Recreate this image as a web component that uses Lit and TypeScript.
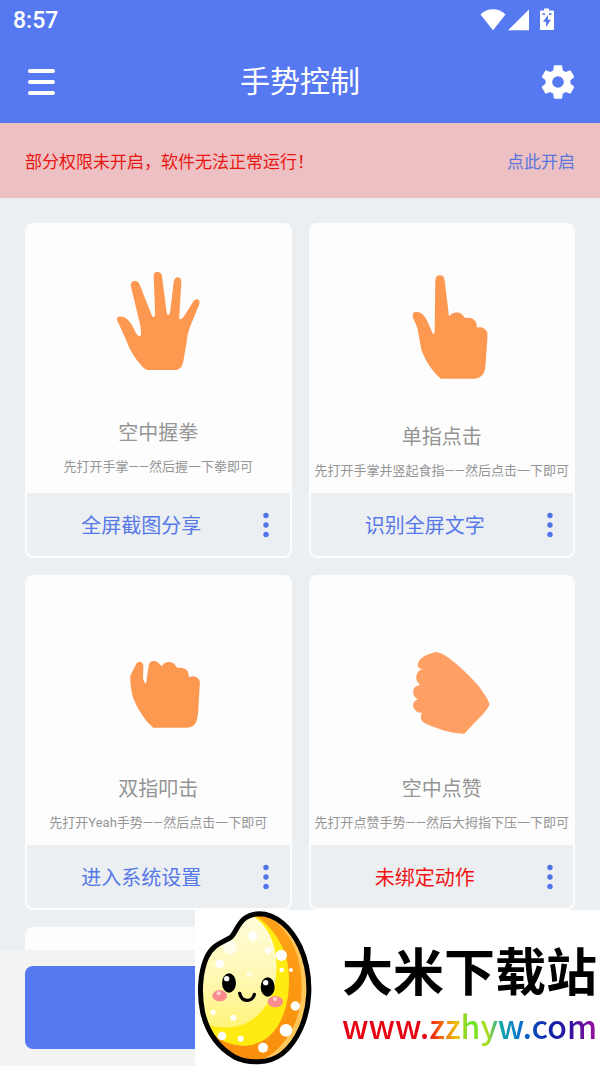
import { LitElement, html, svg, css } from "lit";
import { customElement, property } from "lit/decorators.js";

interface Gesture {
  name: string;
  hint: string;
  action: string;
  bound: boolean;
  height: number;
  viewBox: string;
  path: string;
  tone: string;
}

const GESTURES: Gesture[] = [
  {
    name: "空中握拳",
    hint: "先打开手掌——然后握一下拳即可",
    action: "全屏截图分享",
    bound: true,
    height: 142,
    viewBox: "-5 -42 360 426",
    tone: "#fd9851",
    path: "M52 190C54 183 66 183 74 187C90 195 98 212 107 230C112 240 118 246 122 243C126 238 124 222 121 207L94 95C91 81 102 76 111 79C117 81 119 87 122 94L152 170C156 181 159 187 163 186C167 184 166 176 166 168L162 64C162 54 166 51 174 51C182 51 186 55 187 63L200 165C201 174 202 180 206 180C210 180 211 173 212 165L222 82C223 72 228 67 235 67C242 68 246 73 245 83L239 180C238 188 239 193 243 193C248 193 252 185 257 178L280 141C285 133 291 131 296 134C301 138 300 143 298 149L271 216C265 231 263 246 261 260L251 319C248 335 241 345 228 345H148C136 345 131 338 124 330C105 309 92 288 82 262L55 201C53 197 51 194 52 190Z",
  },
  {
    name: "单指点击",
    hint: "先打开手掌并竖起食指——然后点击一下即可",
    action: "识别全屏文字",
    bound: true,
    height: 150,
    viewBox: "-40 -69 360 450",
    tone: "#fd9851",
    path: "M52 165C53 155 62 154 71 157C86 162 93 177 100 193L113 222C116 225 118 217 118 208L120 62C120 51 125 46 134 46C143 46 147 52 148 61L159 152C160 161 160 170 163 167C172 157 188 155 198 162C204 166 206 172 210 174C222 172 237 176 242 187C245 193 243 200 246 203C258 198 273 206 276 219C277 225 276 229 276 236L271 310C270 329 267 341 257 349C251 354 245 356 238 356H137C117 340 91 306 78 269L67 208C64 195 57 183 53 174Z",
  },
  {
    name: "双指叩击",
    hint: "先打开Yeah手势——然后点击一下即可",
    action: "进入系统设置",
    bound: true,
    height: 150,
    viewBox: "-34 -171 360 450",
    tone: "#fd9851",
    path: "M63 89L79 57C83 48 91 45 98 50C102 54 102 59 102 65L101 97C103 104 106 114 109 112C112 109 112 99 113 91L118 60C119 48 126 44 135 45C146 46 151 54 157 61C163 49 175 46 186 49C195 52 198 58 204 66C217 63 230 67 235 76C238 82 237 87 239 94C250 87 268 93 271 106C272 111 271 116 271 123L266 202C264 222 261 233 251 240C245 244 239 245 231 245H132C109 226 87 194 73 159C66 139 62 111 63 89Z",
  },
  {
    name: "空中点赞",
    hint: "先打开点赞手势——然后大拇指下压一下即可",
    action: "未绑定动作",
    bound: false,
    height: 150,
    viewBox: "-40 -156 360 450",
    tone: "#fea063",
    path: "M67 72C69 50 95 39 124 33C137 35 150 44 161 51C190 73 216 99 242 126C258 144 274 168 283 189C277 207 257 226 242 241L207 278C173 277 143 269 116 258C97 250 80 246 77 233C76 226 78 220 80 215C68 217 55 207 53 194C53 184 60 177 69 175C56 170 52 159 54 149C56 138 65 133 76 133C62 124 59 107 67 94C71 87 77 86 83 84C75 84 67 80 67 72Z",
  },
];

@customElement("gesture-card")
class GestureCard extends LitElement {
  @property({ attribute: false }) gesture?: Gesture;

  static styles = css`
    :host {
      display: flex;
      flex-direction: column;
      min-width: 0;
      box-sizing: border-box;
      border: 2px solid #fdfdfd;
      border-radius: 8px;
      overflow: hidden;
      background: #ebeff2;
    }
    .panel {
      display: flex;
      flex-direction: column;
      align-items: center;
      justify-content: center;
      min-height: 268px;
      background: #fdfdfd;
      color: #959595;
    }
    .hand {
      display: block;
      width: 120px;
      margin-bottom: 36px;
    }
    .name {
      margin: 0 0 10px;
      font-size: 20px;
      line-height: 28px;
      font-weight: 400;
    }
    .hint {
      margin: 0;
      font-size: 13px;
      line-height: 20px;
      white-space: nowrap;
    }
    .foot {
      display: flex;
      align-items: stretch;
      height: 63px;
    }
    button {
      border: 0;
      padding: 0;
      background: none;
      font: inherit;
      cursor: pointer;
    }
    .action {
      flex: 1;
      min-width: 0;
      font-size: 20px;
      color: #5678e8;
    }
    .unbound {
      color: #f01414;
    }
    .more {
      display: grid;
      place-items: center;
      width: 21px;
      margin-right: 13px;
    }
  `;

  render() {
    const g = this.gesture;
    if (!g) return html`<div class="panel"></div><div class="foot"></div>`;
    return html`
      <div class="panel">
        <svg class="hand" height=${g.height} viewBox=${g.viewBox} aria-hidden="true">
          ${svg`<path d=${g.path} fill=${g.tone} />`}
        </svg>
        <h2 class="name">${g.name}</h2>
        <p class="hint">${g.hint}</p>
      </div>
      <div class="foot">
        <button class="action ${g.bound ? "" : "unbound"}">${g.action}</button>
        <button class="more" aria-label="更多">
          <svg width="6" height="26" viewBox="0 0 6 26" fill="#4f73e8">
            <circle cx="3" cy="3.5" r="2.7" />
            <circle cx="3" cy="13" r="2.7" />
            <circle cx="3" cy="22.5" r="2.7" />
          </svg>
        </button>
      </div>
    `;
  }
}

@customElement("site-badge")
class SiteBadge extends LitElement {
  static styles = css`
    :host {
      display: flex;
      align-items: center;
      gap: 27px;
      background: #fff;
      white-space: nowrap;
      overflow: hidden;
    }
    .rice {
      display: block;
      flex: none;
    }
    .label {
      padding-top: 18px;
    }
    .site {
      font-size: 51px;
      line-height: 56px;
      font-weight: 700;
      color: #000;
    }
    .address {
      display: block;
      width: max-content;
      font-family: "Noto Sans CJK SC", sans-serif;
      font-size: 32px;
      line-height: 46px;
      font-weight: 500;
      color: transparent;
      background: linear-gradient(
        90deg,
        #e60012 0%,
        #e60012 33%,
        #f05a10 38%,
        #f0c010 45%,
        #5fe62a 50%,
        #b0dc20 57%,
        #10a8a8 62%,
        #0a78c8 69%,
        #0a50c0 74%,
        #1020a8 82%,
        #3a10a0 90%,
        #a010a0 100%
      );
      -webkit-background-clip: text;
      background-clip: text;
    }
  `;

  render() {
    return html`
      <svg class="rice" width="120" height="156" viewBox="15 30 360 468" aria-hidden="true">
        <defs>
          <linearGradient id="pale" x1="0" y1="0" x2="0" y2="1">
            <stop offset="0" stop-color="#fffde0" />
            <stop offset=".6" stop-color="#fff8b0" />
            <stop offset="1" stop-color="#fff47a" />
          </linearGradient>
          <linearGradient id="deep" x1="0" y1="0" x2="0" y2="1">
            <stop offset="0" stop-color="#ffa318" />
            <stop offset="1" stop-color="#f98d0c" />
          </linearGradient>
          <clipPath id="body">
            <path d="M122 112C142 97 145 43 207 41C259 41 303 83 330 140C350 184 359 233 356 285C353 353 323 424 277 461C237 492 174 492 132 470C83 441 51 393 38 337C27 283 29 220 50 172C69 132 100 126 122 112Z" />
          </clipPath>
        </defs>
        <g clip-path="url(#body)">
          <rect x="15" y="30" width="360" height="468" fill="#ffc65a" />
          <path d="M225 40C305 90 342 180 334 290C326 375 285 440 225 475L180 498H15V30Z" fill="url(#deep)" />
          <path d="M190 45C245 75 290 140 296 215C302 300 280 370 238 408C190 450 110 450 50 385L20 250L100 30Z" fill="#ffeb12" />
          <path d="M175 40C225 65 254 115 258 175C264 240 250 300 205 344C160 386 105 390 45 372L20 250L90 30Z" fill="url(#pale)" />
          <g fill="#fff">
            <circle cx="189" cy="108" r="14" />
            <circle cx="120" cy="142" r="21" opacity=".7" />
            <circle cx="89" cy="191" r="13" />
            <circle cx="235" cy="151" r="10" />
            <circle cx="274" cy="166" r="17" />
            <circle cx="275" cy="210" r="7" />
            <circle cx="303" cy="210" r="6" />
            <circle cx="316" cy="318" r="14" />
            <circle cx="288" cy="391" r="19" />
            <circle cx="219" cy="443" r="15" />
            <circle cx="152" cy="416" r="9" />
            <circle cx="96" cy="408" r="13" />
            <circle cx="130" cy="353" r="9" />
            <circle cx="69" cy="337" r="8" />
            <circle cx="178" cy="222" r="9" opacity=".6" />
          </g>
        </g>
        <path
          d="M122 112C142 97 145 43 207 41C259 41 303 83 330 140C350 184 359 233 356 285C353 353 323 424 277 461C237 492 174 492 132 470C83 441 51 393 38 337C27 283 29 220 50 172C69 132 100 126 122 112Z"
          fill="none" stroke="#000" stroke-width="15" stroke-linejoin="round" />
        <ellipse cx="89" cy="287" rx="22" ry="17" fill="#fa8c8e" />
        <ellipse cx="256" cy="305" rx="23" ry="17" fill="#fa8c8e" />
        <circle cx="86" cy="280" r="6" fill="#ffd5d5" />
        <circle cx="255" cy="297" r="6" fill="#ffd5d5" />
        <ellipse cx="117" cy="249" rx="21" ry="29" fill="#000" />
        <ellipse cx="233" cy="261" rx="21" ry="29" fill="#000" />
        <circle cx="110" cy="236" r="8" fill="#fff" />
        <circle cx="227" cy="248" r="8" fill="#fff" />
        <path d="M149 280C155 307 187 308 193 283" fill="none" stroke="#000" stroke-width="10" stroke-linecap="round" />
      </svg>
      <div class="label">
        <div class="site">大米下载站</div>
        <span class="address">www.zzhyw.com</span>
      </div>
    `;
  }
}

@customElement("app-root")
class AppRoot extends LitElement {
  static styles = css`
    :host {
      position: relative;
      display: flex;
      flex-direction: column;
      height: 100vh;
      overflow: hidden;
      background: #ebeff2;
      font-family: Roboto, "Noto Sans CJK SC", sans-serif;
    }
    .header {
      flex: none;
      background: #5679f1;
      color: #fff;
    }
    .status {
      display: flex;
      align-items: center;
      justify-content: space-between;
      height: 40px;
      padding: 0 46px 0 13px;
      font-size: 23px;
      font-weight: 500;
    }
    .signals {
      display: block;
    }
    .nav {
      display: grid;
      grid-template-columns: 40px 1fr 40px;
      align-items: center;
      height: 83px;
      padding: 0 22px;
    }
    .title {
      margin: 0;
      text-align: center;
      font-size: 30px;
      line-height: 40px;
      font-weight: 400;
    }
    .icon {
      display: grid;
      place-items: center;
      width: 40px;
      height: 40px;
      padding: 0;
      border: 0;
      background: none;
      color: inherit;
    }
    .notice {
      flex: none;
      display: flex;
      align-items: center;
      justify-content: space-between;
      height: 75px;
      padding: 0 25px;
      background: #edc1c4;
      font-size: 17px;
    }
    .warning {
      margin: 0;
      color: #e91510;
    }
    .enable {
      color: #5a75dc;
      text-decoration: none;
    }
    .list {
      flex: 1;
      min-height: 0;
      display: grid;
      grid-template-columns: 1fr 1fr;
      grid-auto-rows: max-content;
      align-content: start;
      gap: 17px;
      padding: 25px;
      overflow: hidden auto;
      scrollbar-width: none;
    }
    .bottom {
      flex: none;
      display: flex;
      padding: 16px 25px 17px;
      background: #f3f3f3;
    }
    .start {
      flex: 1;
      height: 83px;
      border: 0;
      border-radius: 8px;
      background: #5679f1;
    }
    .badge {
      position: absolute;
      right: 0;
      bottom: 0;
      width: 405px;
      height: 156px;
    }
  `;

  render() {
    return html`
      <header class="header">
        <div class="status">
          <span>8:57</span>
          <svg class="signals" width="75" height="24" viewBox="0 0 75 24" fill="#fff" aria-hidden="true">
            <path d="M1.500 6.500C8 -0.400 20 -0.400 26.500 6.500L14 22.300Z" />
            <path d="M29 22.300H50V1.500Z" />
            <path d="M65 0.500H70V2.500H74Q75 2.500 75 3.500V21Q75 22 74 22H62Q61 22 61 21V3.500Q61 2.500 62 2.500H65Z" />
            <path d="M69 7L64 13.800H67V19L72 11.800H69ZM63.500 5.200H66V7H63.500ZM70 5.200H72.500V7H70Z" fill="#5679f1" />
          </svg>
        </div>
        <nav class="nav">
          <button class="icon" aria-label="菜单">
            <svg width="28" height="26" viewBox="0 0 28 26" fill="#fff">
              <rect width="27" height="4" y="0" rx="2" />
              <rect width="27" height="4" y="11" rx="2" />
              <rect width="27" height="4" y="22" rx="2" />
            </svg>
          </button>
          <h1 class="title">手势控制</h1>
          <button class="icon" aria-label="设置">
            <svg width="40" height="40" viewBox="0 0 24 24" fill="#fff">
              <path d="M12 15.500A3.500 3.500 0 0 1 8.500 12 3.500 3.500 0 0 1 12 8.500 3.500 3.500 0 0 1 15.500 12 3.500 3.500 0 0 1 12 15.500M19.430 12.970C19.470 12.650 19.500 12.330 19.500 12S19.470 11.340 19.430 11L21.540 9.370C21.730 9.220 21.780 8.950 21.660 8.730L19.660 5.270C19.540 5.050 19.270 4.960 19.050 5.050L16.560 6.050C16.040 5.660 15.500 5.320 14.870 5.070L14.500 2.420C14.460 2.180 14.250 2 14 2H10C9.750 2 9.540 2.180 9.500 2.420L9.130 5.070C8.500 5.320 7.960 5.660 7.440 6.050L4.950 5.050C4.730 4.960 4.460 5.050 4.340 5.270L2.340 8.730C2.210 8.950 2.270 9.220 2.460 9.370L4.570 11C4.530 11.340 4.500 11.670 4.500 12S4.530 12.650 4.570 12.970L2.460 14.630C2.270 14.780 2.210 15.050 2.340 15.270L4.340 18.730C4.460 18.950 4.730 19.030 4.950 18.950L7.440 17.940C7.960 18.340 8.500 18.680 9.130 18.930L9.500 21.580C9.540 21.820 9.750 22 10 22H14C14.250 22 14.460 21.820 14.500 21.580L14.870 18.930C15.500 18.670 16.040 18.340 16.560 17.940L19.050 18.950C19.270 19.030 19.540 18.950 19.660 18.730L21.660 15.270C21.780 15.050 21.730 14.780 21.540 14.630Z" />
            </svg>
          </button>
        </nav>
      </header>
      <section class="notice">
        <p class="warning">部分权限未开启，软件无法正常运行！</p>
        <a class="enable" href="#">点此开启</a>
      </section>
      <main class="list">
        ${GESTURES.map((g) => html`<gesture-card .gesture=${g}></gesture-card>`)}
        <gesture-card></gesture-card>
        <gesture-card></gesture-card>
      </main>
      <footer class="bottom">
        <button class="start" aria-label="启动"></button>
      </footer>
      <site-badge class="badge"></site-badge>
    `;
  }
}
